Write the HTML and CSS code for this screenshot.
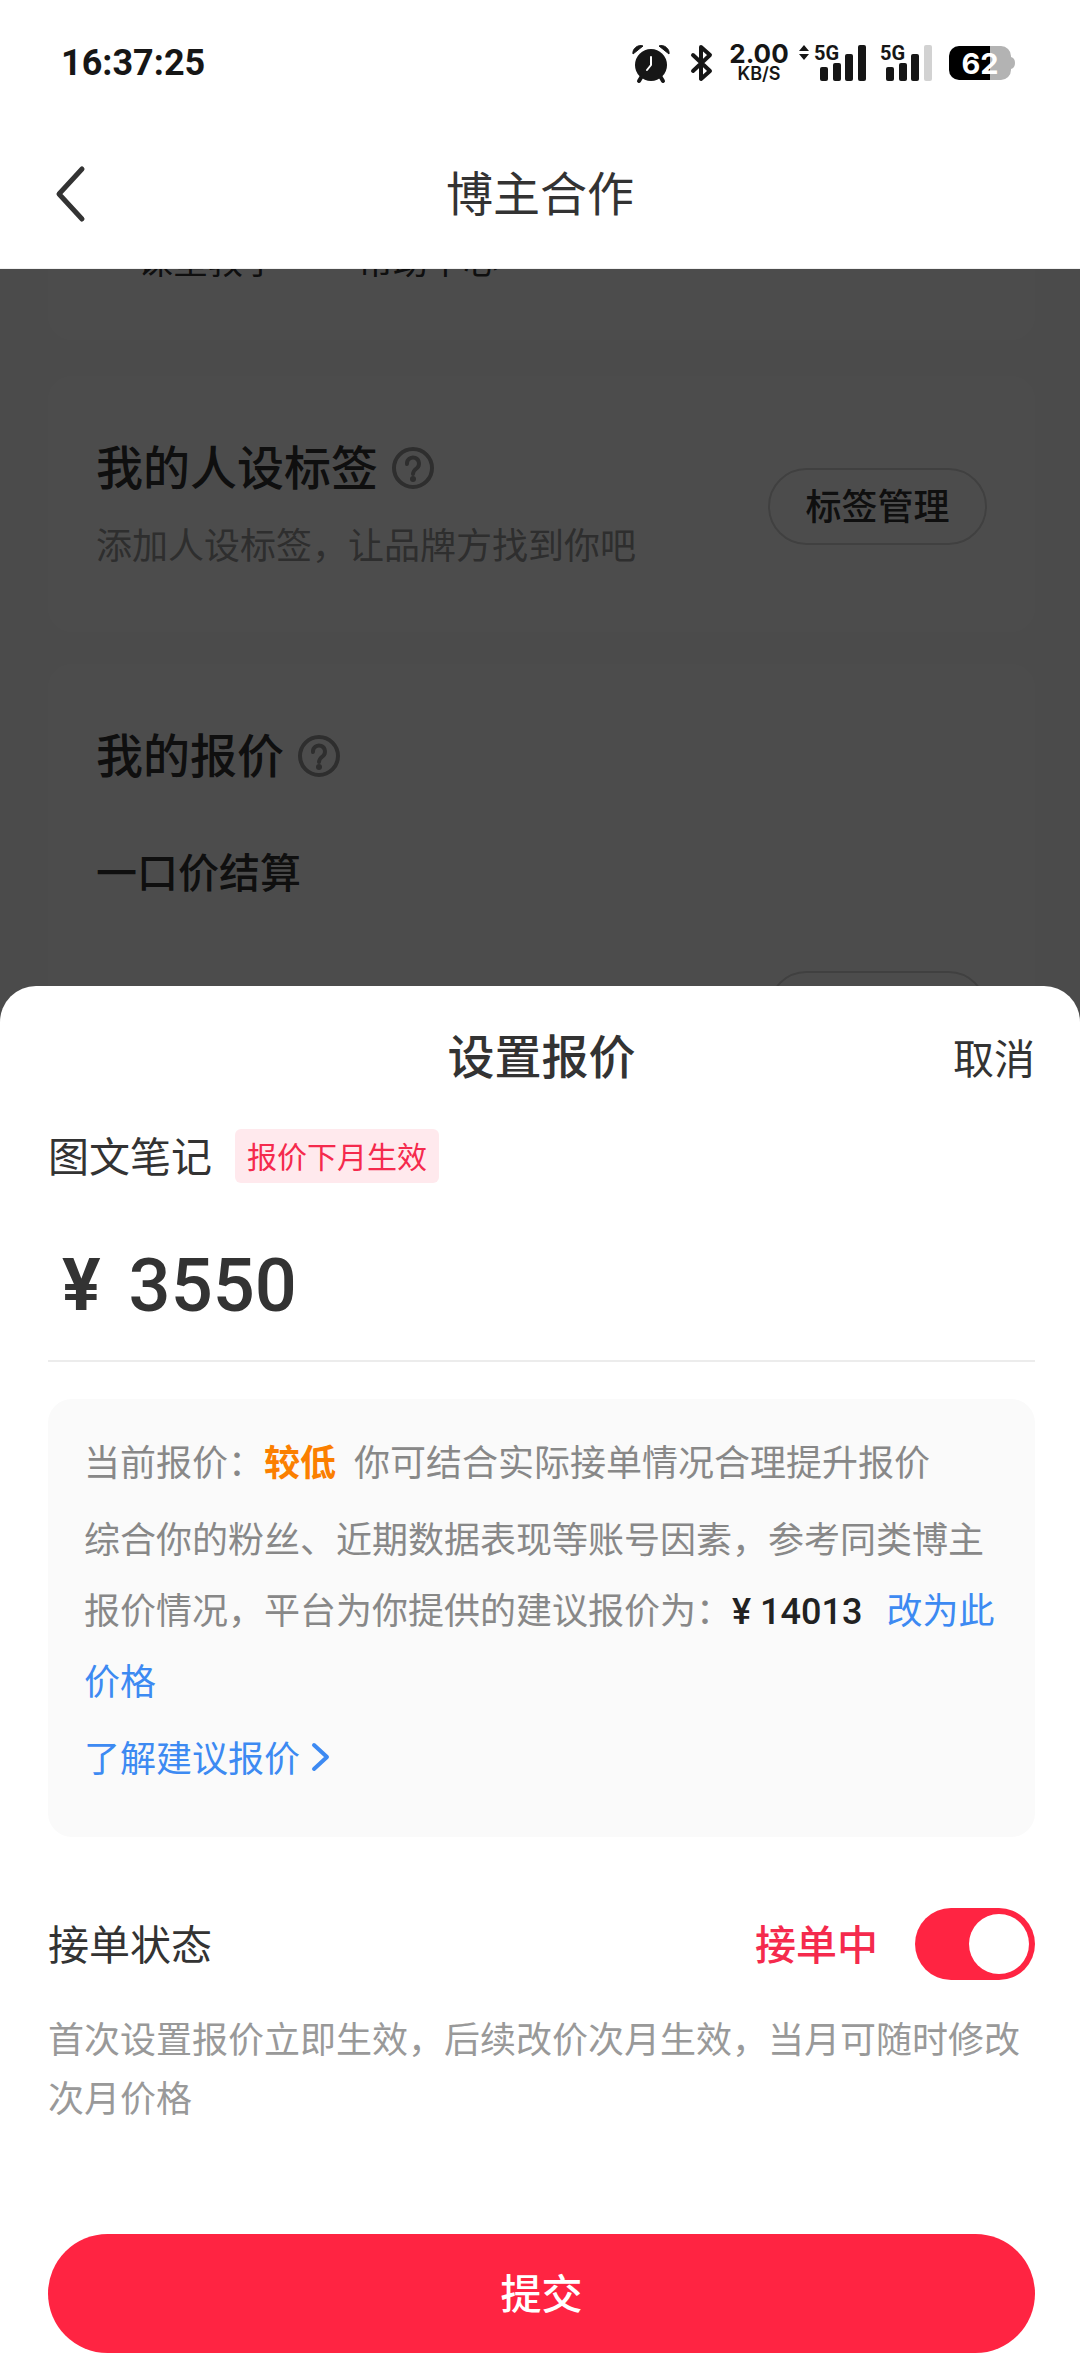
FILE: index.html
```html
<!DOCTYPE html>
<html lang="zh-CN">
<head>
  <meta charset="utf-8">
  <meta name="viewport" content="width=device-width, initial-scale=1">
  <title>博主合作</title>
  <link rel="stylesheet" href="styles.css">
</head>
<body class="app">
  <header class="topbar">
    <div class="status">
      <time class="status-time">16:37:25</time>
      <div class="status-icons">
        <svg class="icon-alarm" width="38" height="38" viewBox="0 0 38 38" aria-hidden="true">
          <circle cx="19" cy="21" r="16" fill="#161616"/>
          <path d="M1 10C0 5 6 0 11 2z M37 10C38 5 32 0 27 2z" fill="#161616" stroke="#161616" stroke-width="1" stroke-linejoin="round"/>
          <path d="M10 32l-3 5M28 32l3 5" stroke="#161616" stroke-width="4" stroke-linecap="round"/>
          <path d="M19 13v8l-4 5" fill="none" stroke="#fff" stroke-width="2" stroke-linecap="round" stroke-linejoin="round"/>
        </svg>
        <svg class="icon-bluetooth" width="22" height="38" viewBox="0 0 22 38" aria-hidden="true">
          <path d="M2 11l17 16-9 8V3l9 8L2 27" fill="none" stroke="#161616" stroke-width="4" stroke-linecap="round" stroke-linejoin="round"/>
        </svg>
        <div class="speed"><span class="speed-value">2.00</span><span class="speed-unit">KB/S</span></div>
        <svg class="icon-signal-data" width="68" height="38" viewBox="0 0 68 38" role="img" aria-label="5G">
          <path d="M0 7l5-6 5 6zM0 10l5 6 5-6z" fill="#161616"/>
          <text class="net" x="15" y="16">5G</text>
          <g fill="#161616"><rect x="21" y="23" width="8" height="14" rx="2"/><rect x="34" y="19" width="8" height="18" rx="2"/><rect x="46" y="10" width="8" height="27" rx="2"/><rect x="59" y="1" width="8" height="36" rx="2"/></g>
        </svg>
        <svg class="icon-signal" width="53" height="38" viewBox="0 0 53 38" role="img" aria-label="5G">
          <text class="net" x="0" y="16">5G</text>
          <g fill="#161616"><rect x="6" y="23" width="8" height="14" rx="2"/><rect x="19" y="19" width="8" height="18" rx="2"/><rect x="31" y="10" width="8" height="27" rx="2"/></g>
          <rect x="44" y="1" width="8" height="36" rx="2" fill="#d2d2d2"/>
        </svg>
        <svg class="icon-battery" width="66" height="34" viewBox="0 0 66 34" role="img" aria-label="62%">
          <path d="M41 0h11a10 10 0 0 1 10 10v1q4 1 4 6t-4 6v1a10 10 0 0 1-10 10H41z" fill="#b3b3b3"/>
          <path d="M10 0h31v34H10A10 10 0 0 1 0 24V10A10 10 0 0 1 10 0z" fill="#000"/>
          <text class="charge" x="31" y="28" text-anchor="middle">62</text>
        </svg>
      </div>
    </div>
    <nav class="nav">
      <button class="back" type="button" aria-label="返回">
        <svg width="30" height="56" viewBox="0 0 30 56" aria-hidden="true"><path d="M26 3L3 28l23 25" fill="none" stroke="#333" stroke-width="5" stroke-linecap="round" stroke-linejoin="round"/></svg>
      </button>
      <h1 class="title title-light">博主合作</h1>
    </nav>
  </header>

  <main class="stage">
    <div class="feed">
      <section class="card card-links">
        <a class="link" href="#course">课堂教学</a>
        <a class="link" href="#help">帮助中心</a>
      </section>
      <section class="card card-tags">
        <div class="card-text">
          <h2 class="card-title">我的人设标签
            <svg class="help" width="42" height="42" viewBox="0 0 42 42" aria-hidden="true"><circle cx="21" cy="21" r="19" fill="none" stroke="#999" stroke-width="4"/><path d="M15 17a6 6 0 1 1 10 4q-4 3-4 6" fill="none" stroke="#999" stroke-width="4" stroke-linecap="round"/><circle cx="21" cy="32" r="3" fill="#999"/></svg>
          </h2>
          <p class="card-desc">添加人设标签，让品牌方找到你吧</p>
        </div>
        <button class="pill" type="button">标签管理</button>
      </section>
      <section class="card card-price">
        <h2 class="card-title">我的报价
          <svg class="help" width="42" height="42" viewBox="0 0 42 42" aria-hidden="true"><circle cx="21" cy="21" r="19" fill="none" stroke="#999" stroke-width="4"/><path d="M15 17a6 6 0 1 1 10 4q-4 3-4 6" fill="none" stroke="#999" stroke-width="4" stroke-linecap="round"/><circle cx="21" cy="32" r="3" fill="#999"/></svg>
        </h2>
        <h3 class="card-subtitle">一口价结算</h3>
        <button class="pill pill-end" type="button" aria-label="修改报价"></button>
      </section>
    </div>
    <div class="backdrop"></div>

    <form class="sheet" role="dialog" aria-labelledby="sheet-title">
      <div class="sheet-head">
        <h2 class="title" id="sheet-title">设置报价</h2>
        <button class="cancel" type="button">取消</button>
      </div>
      <div class="kind">
        <label class="kind-name" for="price">图文笔记</label>
        <span class="tag">报价下月生效</span>
      </div>
      <div class="price">
        <span class="price-sign">¥</span>
        <input class="price-input" id="price" type="text" inputmode="numeric" value="3550">
      </div>
      <div class="advice">
        <p class="advice-line">当前报价：<strong class="low">较低</strong>你可结合实际接单情况合理提升报价</p>
        <p class="advice-line">综合你的粉丝、近期数据表现等账号因素，参考同类博主报价情况，平台为你提供的建议报价为：<b class="suggest">¥ 14013</b><a class="blue" href="#apply">改为此价格</a></p>
        <p class="advice-line"><a class="blue more" href="#learn">了解建议报价
          <svg width="18" height="28" viewBox="0 0 18 28" aria-hidden="true"><path d="M2 2l13 12L2 26" fill="none" stroke="#3d8af2" stroke-width="4" stroke-linecap="round" stroke-linejoin="round"/></svg></a></p>
      </div>
      <div class="state">
        <label class="state-name" for="accepting">接单状态</label>
        <span class="state-value">接单中</span>
        <input class="switch" id="accepting" type="checkbox" role="switch" checked>
      </div>
      <p class="note">首次设置报价立即生效，后续改价次月生效，当月可随时修改次月价格</p>
      <button class="submit" type="submit">提交</button>
    </form>
  </main>
</body>
</html>
```

FILE: styles.css
```css
* {
  box-sizing: border-box;
}

body, h1, h2, h3, p {
  margin: 0;
}

button, input {
  font: inherit;
  color: inherit;
  margin: 0;
  padding: 0;
  border: 0;
  background: none;
}

a {
  color: inherit;
  text-decoration: none;
}

svg {
  display: block;
  flex: none;
  overflow: visible;
}

.app {
  display: flex;
  flex-direction: column;
  min-height: 100vh;
  background: #fff;
  color: #333;
  font-family: "Noto Sans CJK SC", sans-serif;
  font-size: 36px;
}

/* Top bar */
.topbar {
  position: relative;
  z-index: 1;
  padding-bottom: 12px;
  background: #fff;
  border-bottom: 1px solid #f0f0f0;
}

.status {
  display: flex;
  align-items: center;
  justify-content: space-between;
  height: 126px;
  padding: 0 65px 0 61px;
  color: #161616;
}

.status-time {
  font: 700 36px/44px Roboto, sans-serif;
}

.status-icons {
  display: flex;
  align-items: center;
}

.icon-bluetooth {
  margin-left: 21px;
}

.speed {
  display: flex;
  flex-direction: column;
  align-items: center;
  width: 60px;
  margin: 0 10px 0 16px;
  font-family: Inter, sans-serif;
}

.speed-value {
  font-size: 26px;
  font-weight: 700;
  line-height: 22px;
}

.speed-unit {
  font-size: 18px;
  font-weight: 600;
  line-height: 18px;
}

.net {
  font: 700 20px Roboto, sans-serif;
  fill: #161616;
}

.icon-signal {
  margin-left: 13px;
}

.icon-battery {
  margin-left: 16px;
}

.charge {
  font: 700 29px Inter, sans-serif;
  fill: #fff;
}

.nav {
  display: grid;
  grid-template-columns: 1fr auto 1fr;
  align-items: center;
  height: 130px;
  padding: 0 56px;
}

.back {
  justify-self: start;
  padding-top: 6px;
  cursor: pointer;
}

.title {
  grid-column: 2;
  font-size: 47px;
  font-weight: 500;
  line-height: 60px;
}

.title-light {
  font-weight: 400;
}

/* Feed, backdrop and sheet share one cell */
.stage {
  display: grid;
  grid-template-columns: minmax(0, 1fr);
  flex: 1;
}

.feed, .backdrop, .sheet {
  grid-area: 1 / 1;
}

.feed {
  min-height: 0;
  overflow: hidden;
  background: #fafafa;
  padding: 0 45px 0 48px;
}

.backdrop {
  z-index: 1;
  background: rgba(0, 0, 0, 0.7);
}

.card {
  margin-bottom: 32px;
  padding: 59px 48px 65px;
  border-radius: 24px;
  background: #fff;
}

/* The feed is scrolled, so its first card starts under the top bar */
.card-links {
  display: flex;
  gap: 80px;
  margin-top: -34px;
  margin-bottom: 36px;
  padding: 0 90px 57px;
}

.link {
  font-size: 35px;
  line-height: 48px;
}

.card-tags {
  display: flex;
  align-items: center;
  justify-content: space-between;
}

.card-title {
  display: flex;
  align-items: center;
  gap: 14px;
  font-size: 47px;
  font-weight: 500;
  line-height: 60px;
}

.help {
  margin-top: 6px;
}

.card-desc {
  margin-top: 24px;
  color: #999;
  line-height: 48px;
}

.card-subtitle {
  margin: 60px 0 74px;
  font-size: 41px;
  font-weight: 500;
  line-height: 54px;
}

.pill {
  width: 219px;
  height: 77px;
  margin-top: 10px;
  padding-bottom: 4px;
  border: 2px solid #d6d6d6;
  border-radius: 39px;
  font-weight: 500;
}

.pill-end {
  display: block;
  margin-left: auto;
}

/* Sheet */
.sheet {
  z-index: 2;
  align-self: end;
  padding: 38px 45px 22px 48px;
  border-radius: 36px 36px 0 0;
  background: #fff;
}

.sheet-head {
  display: grid;
  grid-template-columns: 1fr auto 1fr;
  align-items: center;
}

.cancel {
  justify-self: end;
  padding-top: 4px;
  font-size: 41px;
  line-height: 54px;
}

.kind {
  display: flex;
  align-items: center;
  gap: 23px;
  margin-top: 45px;
}

.kind-name, .state-name, .state-value {
  padding-bottom: 4px;
  font-size: 41px;
  line-height: 50px;
}

.tag {
  padding: 0 12px 2px;
  border-radius: 6px;
  background: #ffe9ed;
  color: #f52a4d;
  font-size: 30px;
  line-height: 52px;
}

.price {
  display: flex;
  align-items: center;
  gap: 28px;
  height: 151px;
  margin-top: 28px;
  padding-left: 14px;
  border-bottom: 2px solid #ececec;
  font-family: Roboto, sans-serif;
  font-weight: 500;
  line-height: 90px;
}

.price-sign {
  font-size: 72px;
  font-weight: 700;
}

.price-input {
  flex: 1;
  min-width: 0;
  font-size: 74px;
}

.advice {
  display: flex;
  flex-direction: column;
  gap: 6px;
  margin-top: 37px;
  padding: 26px 34px 45px 36px;
  border-radius: 24px;
  background: #fafafa;
  color: #888;
}

.advice-line {
  line-height: 71px;
}

.low {
  margin-right: 18px;
  color: #fb7f00;
  font-weight: 700;
}

.suggest {
  margin-right: 24px;
  color: #222;
  font-family: Roboto, sans-serif;
  font-weight: 500;
  line-height: 1;
}

.blue {
  color: #3d8af2;
}

.more {
  display: flex;
  align-items: center;
  gap: 12px;
}

.state {
  display: flex;
  align-items: center;
  margin-top: 71px;
}

.state-value {
  margin-left: auto;
  color: #f52a4d;
  font-weight: 500;
}

.switch {
  display: flex;
  align-items: center;
  appearance: none;
  width: 120px;
  height: 72px;
  margin-left: 37px;
  padding: 6px;
  border-radius: 36px;
  background: #ccc;
}

.switch::before {
  content: "";
  width: 60px;
  height: 60px;
  border-radius: 50%;
  background: #fff;
}

.switch:checked {
  justify-content: flex-end;
  background: #ff2442;
}

.note {
  margin-top: 28px;
  color: #999;
  line-height: 59px;
}

.submit {
  display: block;
  width: 100%;
  height: 119px;
  margin-top: 108px;
  padding-bottom: 6px;
  border-radius: 60px;
  background: #ff2442;
  color: #fff;
  font-size: 41px;
  font-weight: 500;
}
```
